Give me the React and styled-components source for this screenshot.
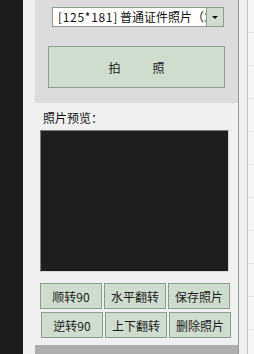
import React from 'react';
import styled, { createGlobalStyle } from 'styled-components';

const Global = createGlobalStyle`
  html, body {
    margin: 0;
    padding: 0;
    width: 254px;
    height: 354px;
    overflow: hidden;
    background: #f0f0f0;
    font-family: "Noto Sans CJK SC", "Liberation Sans", sans-serif;
  }
`

const Screen = styled.div`
  display: flex;
  width: 254px;
  height: 354px;
`

const DarkStrip = styled.div`
  width: 23px;
  background: #1d1d1d;
`

const Gutter = styled.div`
  width: ${props => props.w}px;
  background: #f0f0f0;
`

const Panel = styled.div`
  width: 203px;
  display: flex;
  flex-direction: column;
  border-right: 1px solid #8a9e8a;
`

const TopSection = styled.div`
  height: 103px;
  background: #dcdcdc;
  display: flex;
  flex-direction: column;
`

const Select = styled.div`
  margin: 7px 0 0 17px;
  width: 170px;
  height: 18px;
  border: 1px solid #8a9c8a;
  background: #fff;
  display: flex;
  overflow: hidden;
`

const SelectText = styled.div`
  flex: 1;
  overflow: hidden;
  white-space: nowrap;
  font-size: 12px;
  line-height: 18px;
  padding-left: 5px;
  color: #111;
`

const Ascii = styled.span`
  letter-spacing: 0.7px;
  margin-right: 2px;
`

const SelectArrow = styled.div`
  width: 16px;
  border-left: 1px solid #8a9c8a;
  background: #cfdccf;
  display: flex;
  align-items: center;
  justify-content: center;
  &::after {
    content: "";
    border-left: 3px solid transparent;
    border-right: 3px solid transparent;
    border-top: 3px solid #111;
  }
`

const ShootButton = styled.div`
  margin: 19px 0 0 13px;
  width: 175px;
  height: 40px;
  border: 1px solid #8a9c8a;
  background: #cfddcf;
  display: flex;
  align-items: center;
  justify-content: center;
  gap: 32px;
  font-size: 12px;
  color: #1a1a1a;
`

const LowerSection = styled.div`
  flex: 1;
  background: #f0f0f0;
  display: flex;
  flex-direction: column;
  padding-left: 5px;
`

const Label = styled.div`
  margin: 6px 0 0 3px;
  height: 17px;
  font-size: 12px;
  line-height: 17px;
  color: #111;
`

const Preview = styled.div`
  margin-top: 4px;
  width: 187px;
  height: 140px;
  background: #1e1e1e;
  border-top: 1px solid #7a7a7a;
  border-left: 1px solid #7a7a7a;
  border-right: 1px solid #d8d8d8;
  border-bottom: 1px solid #d8d8d8;
`

const ButtonGrid = styled.div`
  margin-top: 11px;
  display: flex;
  flex-direction: column;
  gap: 3px;
`

const ButtonRow = styled.div`
  display: flex;
  gap: 2px;
  padding-left: ${props => props.shift}px;
`

const ToolButton = styled.div`
  width: 60px;
  height: 24px;
  border: 1px solid #8a9c8a;
  background: #cfddcf;
  display: flex;
  align-items: center;
  justify-content: center;
  font-size: 12px;
  color: #1a1a1a;
`

const BottomBar = styled.div`
  height: 9px;
  background: #adadad;
`

const RightEdge = styled.div`
  flex: 1;
  border-left: 1px solid #c4c4c4;
  background: repeating-linear-gradient(#f6f6f6 0 32px, #e6e6ec 32px 33px);
`

const rows = [
  ['顺转90', '水平翻转', '保存照片'],
  ['逆转90', '上下翻转', '删除照片'],
];

export default function App() {
  return (
    <Screen>
      <Global />
      <DarkStrip />
      <Gutter w={12} />
      <Panel>
        <TopSection>
          <Select>
            <SelectText><Ascii>[125*181]</Ascii>普通证件照片（3寸）</SelectText>
            <SelectArrow />
          </Select>
          <ShootButton>
            <span>拍</span>
            <span>照</span>
          </ShootButton>
        </TopSection>
        <LowerSection>
          <Label>照片预览：</Label>
          <Preview />
          <ButtonGrid>
            {rows.map((row, i) => (
              <ButtonRow key={i} shift={i}>
                {row.map(t => <ToolButton key={t}>{t}</ToolButton>)}
              </ButtonRow>
            ))}
          </ButtonGrid>
        </LowerSection>
        <BottomBar />
      </Panel>
      <Gutter w={8} />
      <RightEdge />
    </Screen>
  );
}
